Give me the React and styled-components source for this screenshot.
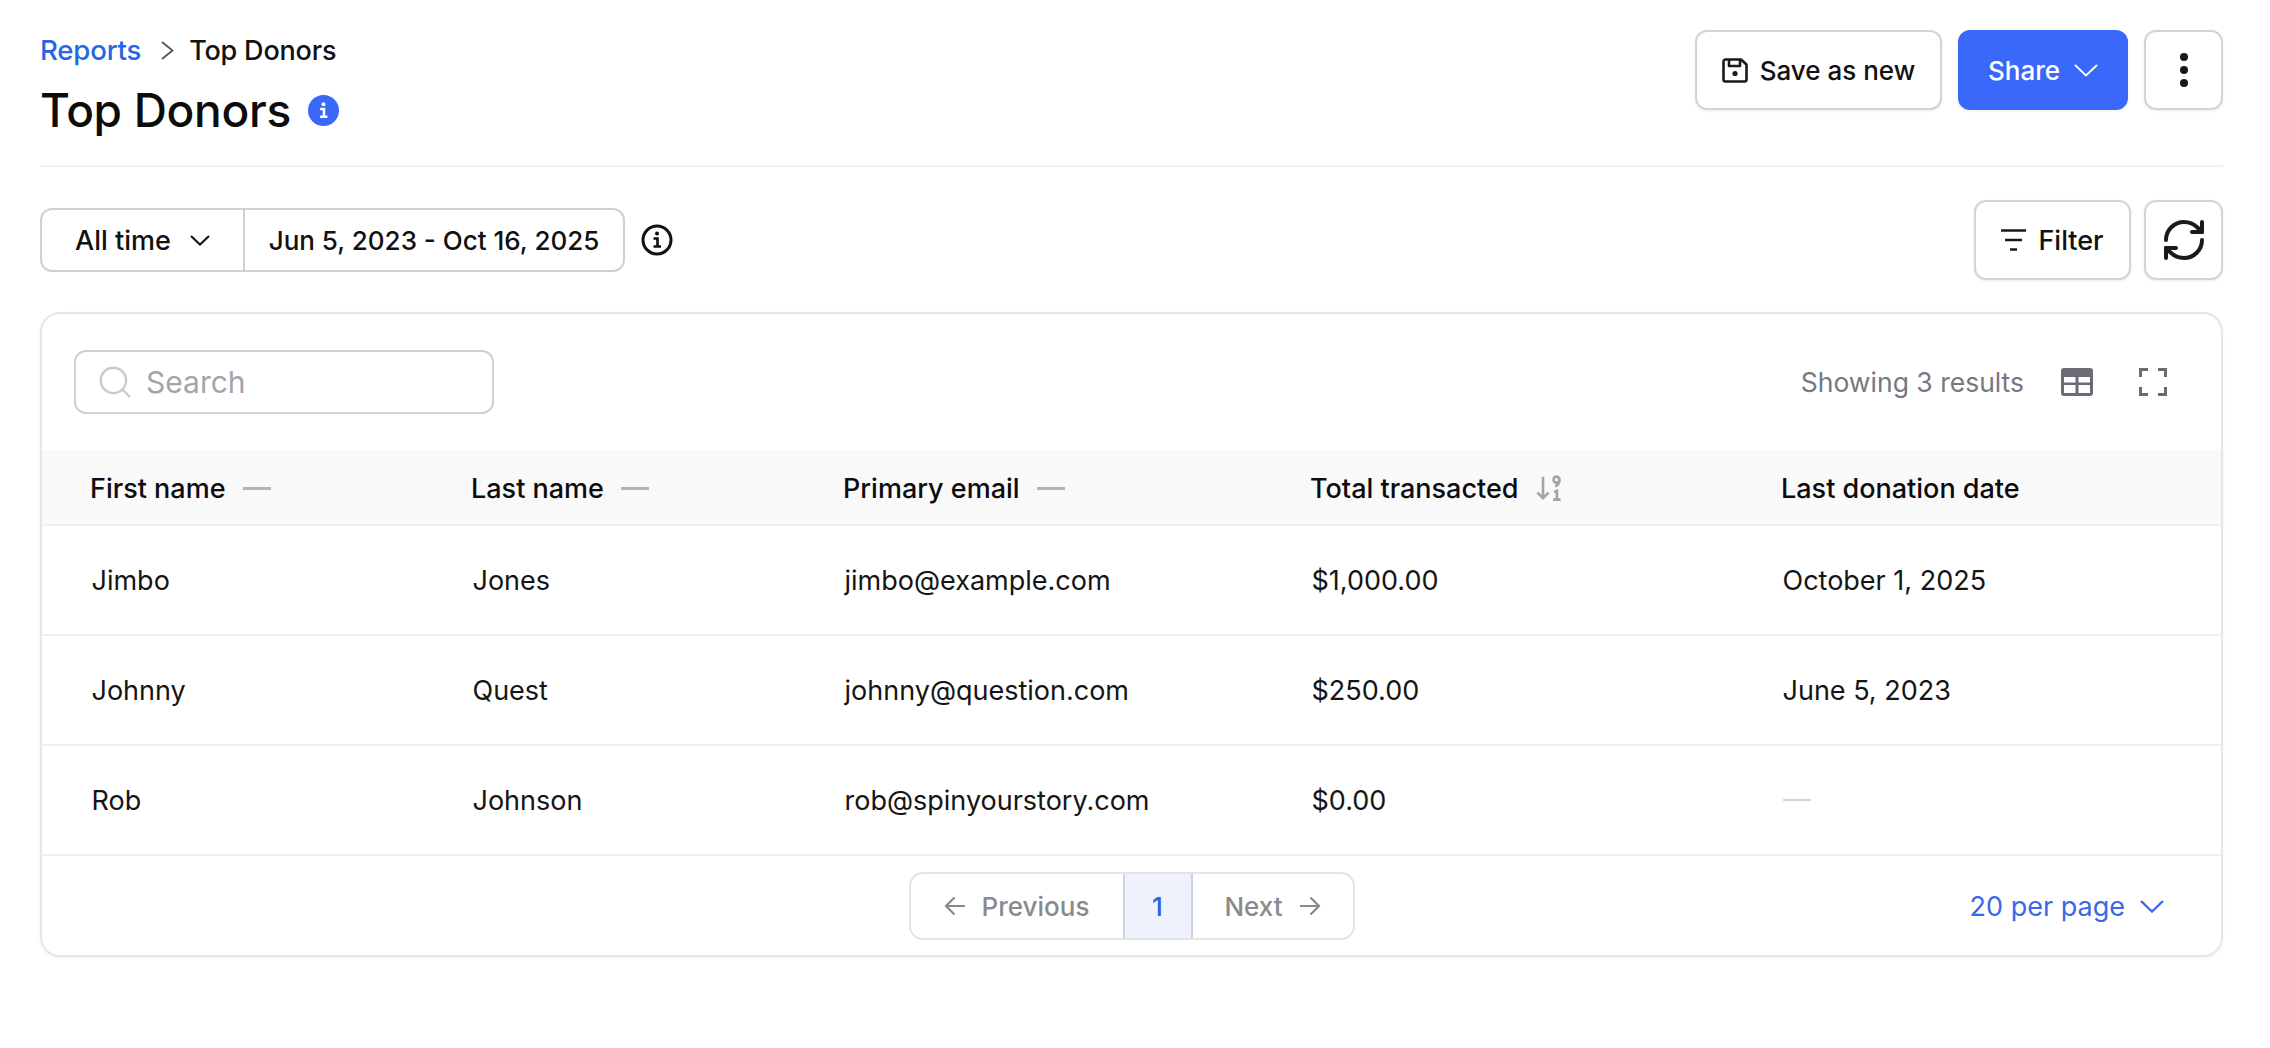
import React from "react";
import styled, { createGlobalStyle } from "styled-components";
import { Search as SearchGlyph, RefreshCw } from "lucide-react";

const rows = [
  ["Jimbo", "Jones", "jimbo@example.com", "$1,000.00", "October 1, 2025"],
  ["Johnny", "Quest", "johnny@question.com", "$250.00", "June 5, 2023"],
  ["Rob", "Johnson", "rob@spinyourstory.com", "$0.00", null],
];

const Chevron = ({ w = 24, h = 13, sw = 2, right }) => (
  <svg width={w} height={h} viewBox={`0 0 ${w} ${h}`} fill="none" stroke="currentColor" strokeWidth={sw}>
    {right ? (
      <path d={`M1 1L${w - 1.5} ${h / 2}L1 ${h - 1}`} />
    ) : (
      <path d={`M1 1L${w / 2} ${h - 1.5}L${w - 1} 1`} />
    )}
  </svg>
);

const Arrow = ({ left }) => (
  <svg width="22" height="20" viewBox="0 0 22 20" fill="none" stroke="currentColor" strokeWidth="2.2">
    {left ? <path d="M21 10H2M10.500 1.500L2 10L10.500 18.500" /> : <path d="M1 10H20M11.500 1.500L20 10L11.500 18.500" />}
  </svg>
);

const InfoGlyph = ({ size = 32, color = "#111", filled }) => (
  <svg width={size} height={size} viewBox="0 0 32 32" fill="none">
    <circle cx="16" cy="16" r={filled ? 16 : 14} fill={filled ? color : "none"} stroke={filled ? "none" : color} strokeWidth="3" />
    <circle cx="16" cy="9.5" r="2" fill={filled ? "#fff" : color} />
    <path d="M12.5 14.5H16.5V22M12.5 22.5H20" stroke={filled ? "#fff" : color} strokeWidth="2.6" />
  </svg>
);

const SaveGlyph = () => (
  <svg width="26" height="25" viewBox="0 0 26 25" fill="none" stroke="#1a1a1a" strokeWidth="2.6" strokeLinejoin="round">
    <path d="M3.5 1.500H19L24.5 6.500V21.500A2 2 0 0 1 22.5 23.500H3.5A2 2 0 0 1 1.5 21.500V3.500A2 2 0 0 1 3.5 1.500Z" />
    <path d="M7 1.500V8H18V1.500" />
    <circle cx="13" cy="15.500" r="2.6" fill="#1a1a1a" stroke="none" />
  </svg>
);

const FilterGlyph = () => (
  <svg width="25" height="22" viewBox="0 0 25 22" fill="none" stroke="#1a1a1a" strokeWidth="2.4">
    <path d="M0 1.500H25M4 11H21M9 20.500H16" />
  </svg>
);

const TableGlyph = () => (
  <svg width="32" height="28" viewBox="0 0 32 28">
    <rect width="32" height="28" rx="3" fill="#6b6b76" />
    <path d="M3 9H14.500V14.500H3ZM17.500 9H29V14.500H17.500ZM3 17H14.500V25H3ZM17.500 17H29V25H17.500Z" fill="#fff" />
  </svg>
);

const ExpandGlyph = () => (
  <svg width="28" height="28" viewBox="0 0 28 28" fill="none" stroke="#6b6b76" strokeWidth="3">
    <path d="M9 1.500H1.500V9M19 1.500H26.500V9M1.500 19V26.500H9M26.500 19V26.500H19" />
  </svg>
);

const SortGlyph = () => (
  <svg width="27" height="26" viewBox="0 0 28 28" fill="none" stroke="#a3a3ad" strokeWidth="2.8">
    <path d="M7 2V25M1 19L7 25L13 19" />
    <circle cx="21.500" cy="5" r="3.200" />
    <path d="M24.700 5C24.700 9 23 11 20 12" />
    <path d="M19 18.500L22 17V26M18 26.500H26" />
  </svg>
);

const Dash = styled.span`
  display: ${({ light }) => (light ? "block" : "inline-block")};
  width: 28px;
  height: ${({ light }) => (light ? 2 : 3)}px;
  background: ${({ light }) => (light ? "#d4d4d8" : "#b3b3ba")};
`;

const App = () => {
  return (
    <Page>
      <GlobalStyle />
      <TopBar>
        <div>
          <Crumbs>
            <CrumbLink>Reports</CrumbLink>
            <CrumbArrow>
              <Chevron right w={13} h={19} sw={1.8} />
            </CrumbArrow>
            <span>Top Donors</span>
          </Crumbs>
          <TitleRow>
            <Title>Top Donors</Title>
            <InfoGlyph filled size={31} color="#3a68f8" />
          </TitleRow>
        </div>
        <Actions>
          <Button w={247}>
            <SaveGlyph />
            Save as new
          </Button>
          <PrimaryButton>
            Share
            <Chevron sw={1.8} />
          </PrimaryButton>
          <IconButton>
            <Dots>
              <i />
              <i />
              <i />
            </Dots>
          </IconButton>
        </Actions>
      </TopBar>

      <FilterBar>
        <DateGroup>
          <RangeSelect>
            All time
            <Chevron w={20} h={11} sw={2} />
          </RangeSelect>
          <RangeValue>Jun 5, 2023 - Oct 16, 2025</RangeValue>
        </DateGroup>
        <InfoGlyph size={32} color="#111" />
        <FilterActions>
          <FilterButton w={157}>
            <FilterGlyph />
            Filter
          </FilterButton>
          <IconButton>
            <RefreshCw size={48} strokeWidth={2} color="#1a1a1a" />
          </IconButton>
        </FilterActions>
      </FilterBar>

      <Card>
        <CardTop>
          <SearchBox>
            <SearchGlyph size={38} strokeWidth={1.5} color="#c9c9ce" />
            <span>Search</span>
          </SearchBox>
          <ResultInfo>
            <ResultText>Showing 3 results</ResultText>
            <TableGlyph />
            <ExpandGlyph />
          </ResultInfo>
        </CardTop>

        <HeadRow>
          <HeadCell>First name <Dash /></HeadCell>
          <HeadCell>Last name <Dash /></HeadCell>
          <HeadCell>Primary email <Dash /></HeadCell>
          <HeadCell>Total transacted <SortGlyph /></HeadCell>
          <HeadCell>Last donation date</HeadCell>
        </HeadRow>

        {rows.map((row) => (
          <BodyRow key={row[0]}>
            {row.map((value, i) => (
              <BodyCell key={i}>{value === null ? <Dash light /> : value}</BodyCell>
            ))}
          </BodyRow>
        ))}

        <CardFoot>
          <Pager>
            <PagerEdge w={212}>
              <Arrow left />
              Previous
            </PagerEdge>
            <PageNumber>1</PageNumber>
            <PagerEdge w={160}>
              Next
              <Arrow />
            </PagerEdge>
          </Pager>
          <PerPage>
            20 per page
            <Chevron sw={2.4} />
          </PerPage>
        </CardFoot>
      </Card>
    </Page>
  );
};

export default App;

const GlobalStyle = createGlobalStyle`
  html, body {
    margin: 0;
    background: #fff;
  }
  * {
    box-sizing: border-box;
  }
`;

const Page = styled.div`
  width: 2270px;
  height: 1048px;
  padding: 30px 47px 0 40px;
  font-family: Inter, "Liberation Sans", sans-serif;
  font-size: 27px;
  color: #111;
  overflow: hidden;
`;

const TopBar = styled.div`
  display: flex;
  justify-content: space-between;
  align-items: flex-start;
  height: 137px;
  border-bottom: 2px solid #f1f1f3;
`;

const Crumbs = styled.div`
  display: flex;
  align-items: center;
  height: 40px;
  font-size: 27px;
  font-weight: 500;
  letter-spacing: -0.2px;
`;

const CrumbLink = styled.span`
  color: #2566e8;
  font-size: 27.6px;
`;

const CrumbArrow = styled.span`
  display: flex;
  margin: 0 15px 0 20px;
  color: #555;
`;

const TitleRow = styled.div`
  display: flex;
  align-items: center;
  gap: 17px;
  margin-top: 12px;
`;

const Title = styled.h1`
  margin: 0;
  font-size: 46px;
  font-weight: 500;
  line-height: 56px;
  letter-spacing: -0.3px;
  color: #0c0c0c;
`;

const Actions = styled.div`
  display: flex;
  gap: 16px;
`;

const Button = styled.div`
  display: flex;
  align-items: center;
  justify-content: center;
  gap: 12px;
  width: ${({ w }) => w}px;
  height: 80px;
  background: #fff;
  border: 2px solid #d4d4d6;
  border-radius: 12px;
  box-shadow: 0 1px 3px rgba(0, 0, 0, 0.08);
  font-weight: 500;
  font-size: 26px;
`;

const FilterButton = styled(Button)`
  font-size: 27px;
`;

const PrimaryButton = styled(Button)`
  width: 170px;
  background: #3a68fb;
  border-color: #3a68fb;
  color: #fff;
  gap: 14px;
`;

const IconButton = styled(Button)`
  width: 79px;
`;

const Dots = styled.div`
  display: flex;
  flex-direction: column;
  gap: 5px;
  i {
    width: 8px;
    height: 8px;
    border-radius: 50%;
    background: #1a1a1a;
  }
`;

const FilterBar = styled.div`
  display: flex;
  align-items: center;
  gap: 16px;
  height: 80px;
  margin-top: 33px;
`;

const DateGroup = styled.div`
  display: flex;
  height: 64px;
  border: 2px solid #d0d0d2;
  border-radius: 12px;
  font-weight: 500;
  font-size: 26px;
`;

const RangeSelect = styled.div`
  display: flex;
  align-items: center;
  justify-content: center;
  gap: 19px;
  width: 203px;
  font-size: 27px;
  border-right: 2px solid #d0d0d2;
`;

const RangeValue = styled.div`
  display: flex;
  align-items: center;
  justify-content: center;
  width: 378px;
`;

const FilterActions = styled.div`
  display: flex;
  gap: 13px;
  margin-left: auto;
`;

const Card = styled.div`
  margin-top: 32px;
  height: 645px;
  border: 2px solid #e6e6e8;
  border-radius: 20px;
  box-shadow: 0 1px 3px rgba(0, 0, 0, 0.06);
  overflow: hidden;
`;

const CardTop = styled.div`
  display: flex;
  align-items: center;
  justify-content: space-between;
  height: 136px;
  padding: 0 54px 0 32px;
`;

const SearchBox = styled.div`
  display: flex;
  align-items: center;
  gap: 12px;
  width: 420px;
  height: 64px;
  padding: 0 20px;
  border: 2px solid #d0d0d2;
  border-radius: 12px;
  color: #a4a4ad;
  font-size: 30px;
`;

const ResultInfo = styled.div`
  display: flex;
  align-items: center;
  gap: 37px;
  svg:last-child {
    margin-left: 9px;
  }
`;

const ResultText = styled.span`
  color: #77777f;
  font-size: 26.5px;
`;

const columns = "381px 372px 467px 471px 1fr";

const HeadRow = styled.div`
  display: grid;
  grid-template-columns: ${columns};
  align-items: center;
  height: 76px;
  padding-top: 2px;
  background: #f9f9fa;
  border-bottom: 2px solid #f0f0f2;
`;

const HeadCell = styled.div`
  display: flex;
  align-items: center;
  gap: 17px;
  padding-left: 48px;
  font-weight: 500;
  font-size: 27px;
  color: #0c0c0c;
`;

const BodyRow = styled.div`
  display: grid;
  grid-template-columns: ${columns};
  align-items: center;
  height: 110px;
  border-bottom: 2px solid #f0f0f2;
`;

const BodyCell = styled.div`
  padding-left: 49.500px;
  font-size: 27px;
  color: #151515;
`;

const CardFoot = styled.div`
  position: relative;
  display: flex;
  justify-content: center;
  align-items: center;
  height: 100px;
`;

const Pager = styled.div`
  display: flex;
  height: 68px;
  border: 2px solid #e4e4e6;
  border-radius: 14px;
  overflow: hidden;
  color: #8a8a8e;
  font-weight: 500;
  font-size: 26px;
`;

const PagerEdge = styled.div`
  display: flex;
  align-items: center;
  justify-content: center;
  gap: 16px;
  width: ${({ w }) => w}px;
`;

const PageNumber = styled.div`
  display: flex;
  align-items: center;
  justify-content: center;
  width: 70px;
  background: #edf2fd;
  border-left: 2px solid #cdd2de;
  border-right: 2px solid #cdd2de;
  color: #2b62e6;
`;

const PerPage = styled.div`
  position: absolute;
  right: 57px;
  display: flex;
  align-items: center;
  gap: 15px;
  color: #3a68e8;
  font-size: 27px;
`;
